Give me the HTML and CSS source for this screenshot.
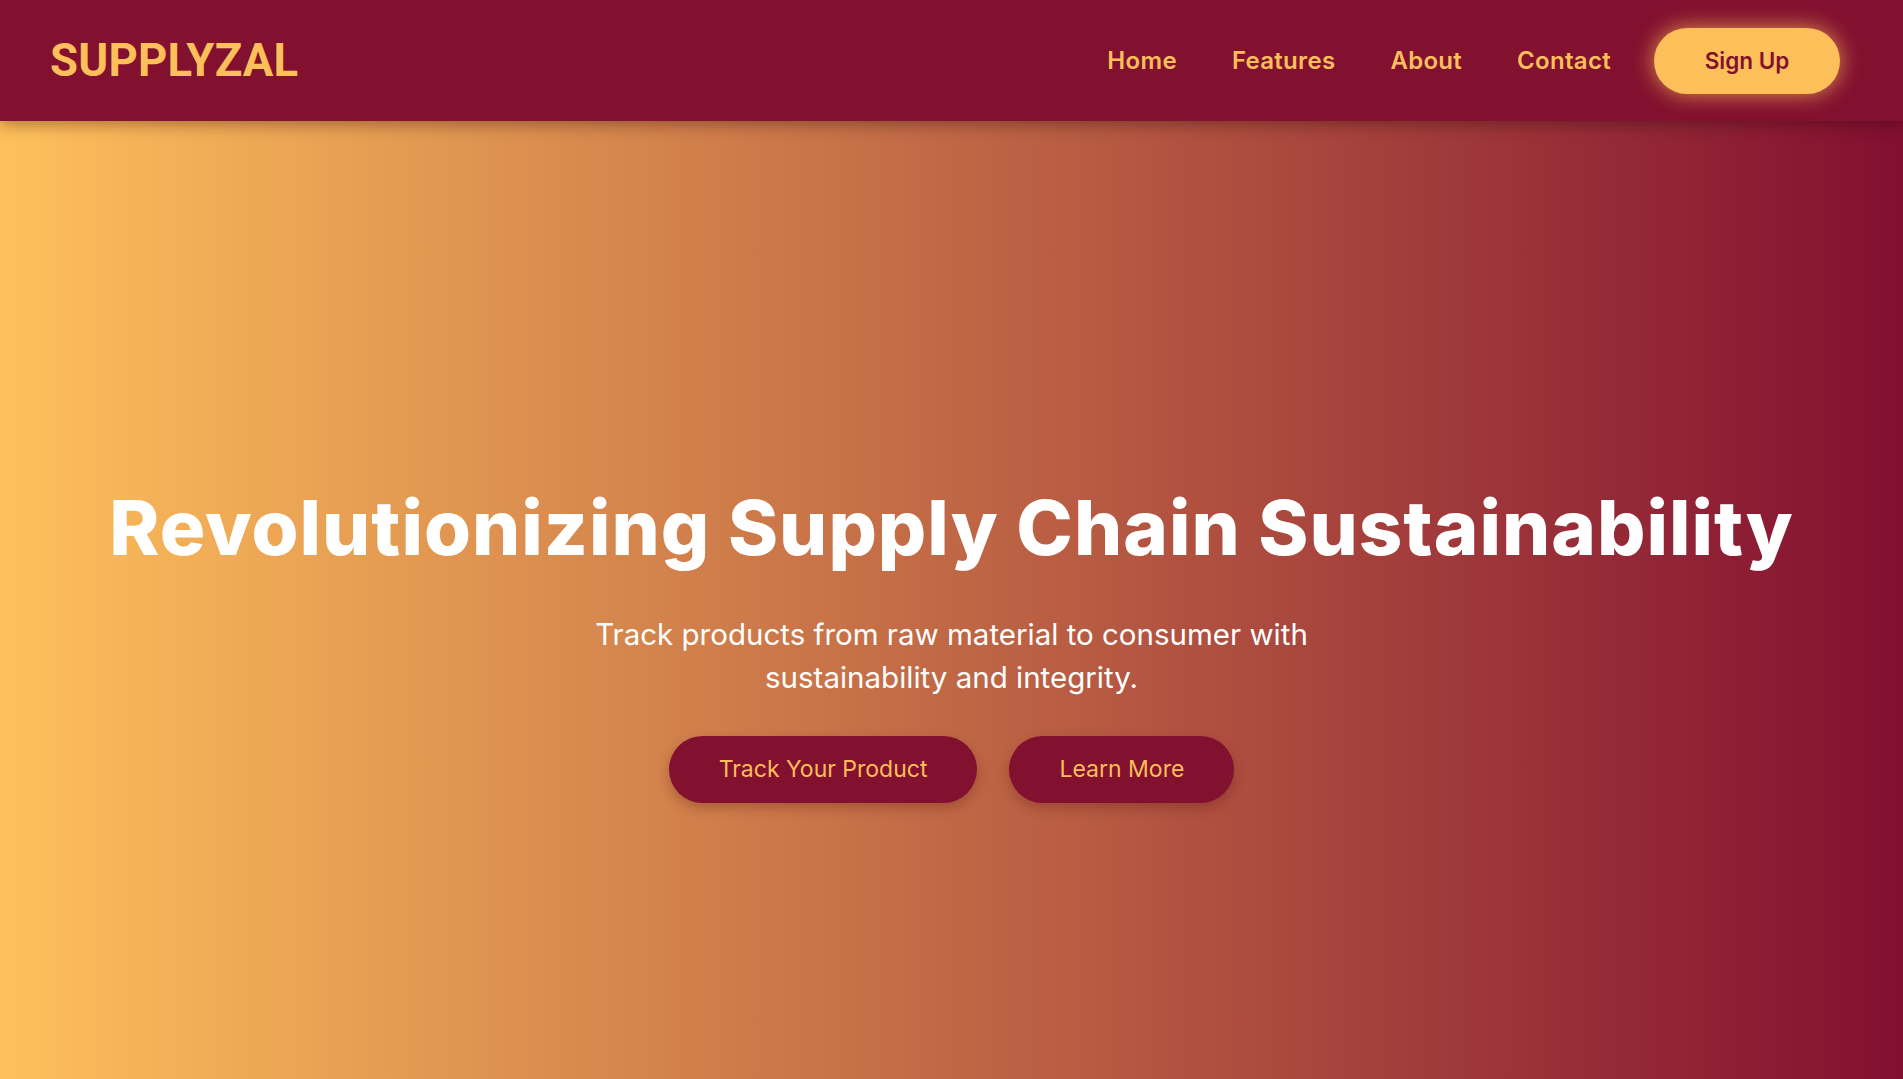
FILE: index.html
```html
<!DOCTYPE html>
<html lang="en">
<head>
<meta charset="UTF-8">
<title>Supplyzal</title>
<link rel="stylesheet" href="styles.css">
</head>
<body>
<header class="site-header">
  <div class="logo">SUPPLYZAL</div>
  <nav class="nav">
    <a class="nav-link" href="#">Home</a>
    <a class="nav-link" href="#">Features</a>
    <a class="nav-link" href="#">About</a>
    <a class="nav-link" href="#">Contact</a>
    <a class="signup" href="#">Sign Up</a>
  </nav>
</header>
<main class="hero">
  <h1 class="hero-title">Revolutionizing Supply Chain Sustainability</h1>
  <p class="hero-sub">Track products from raw material to consumer with sustainability and integrity.</p>
  <div class="hero-actions">
    <a class="btn" href="#">Track Your Product</a>
    <a class="btn" href="#">Learn More</a>
  </div>
</main>
</body>
</html>
```
FILE: styles.css
```css
* { box-sizing: border-box; }
html, body { margin: 0; padding: 0; }
body {
  font-family: "Inter", "Open Sans", sans-serif;
  background: #82102f;
  height: 1079px;
  overflow: hidden;
  display: flex;
  flex-direction: column;
}
.site-header {
  position: relative;
  z-index: 2;
  height: 121px;
  flex: none;
  display: flex;
  align-items: center;
  justify-content: space-between;
  padding: 0 63px 0 50px;
  background: #82102f;
  box-shadow: 0 4px 14px rgba(40, 0, 10, 0.35);
}
.logo {
  font-family: "Roboto", "Liberation Sans", sans-serif;
  font-weight: 700;
  font-size: 45.5px;
  color: #fdbf59;
  letter-spacing: 0.2px;
}
.nav {
  display: flex;
  align-items: center;
}
.nav-link {
  font-weight: 600;
  font-size: 24px;
  letter-spacing: 0.3px;
  color: #fdbf59;
  text-decoration: none;
  margin-right: 55px;
}
.nav-link:nth-child(4) { margin-right: 43px; }
.signup {
  display: block;
  width: 186px;
  height: 66px;
  line-height: 66px;
  text-align: center;
  border-radius: 33px;
  background: #fdbf59;
  color: #82102f;
  font-weight: 600;
  font-size: 22.5px;
  text-decoration: none;
  box-shadow: 0 0 22px rgba(253, 191, 89, 0.75);
}
.hero {
  flex: 1;
  display: flex;
  flex-direction: column;
  align-items: center;
  padding-top: 361px;
  background: linear-gradient(to right, #fec05b 0%, #820f30 100%);
  color: #fff;
  text-align: center;
}
.hero-title {
  margin: 0;
  font-size: 76px;
  line-height: 1.2;
  font-weight: 800;
  letter-spacing: 1px;
}
.hero-sub {
  margin: 40px 0 0;
  max-width: 780px;
  font-size: 29.5px;
  line-height: 43px;
  font-weight: 400;
}
.hero-actions {
  display: flex;
  gap: 32px;
  margin-top: 37px;
}
.btn {
  display: block;
  height: 67px;
  line-height: 67px;
  padding: 0 50px;
  border-radius: 34px;
  background: #82102f;
  color: #fdbf59;
  font-size: 23px;
  text-decoration: none;
  box-shadow: 0 5px 12px rgba(90, 20, 20, 0.3);
}
```
